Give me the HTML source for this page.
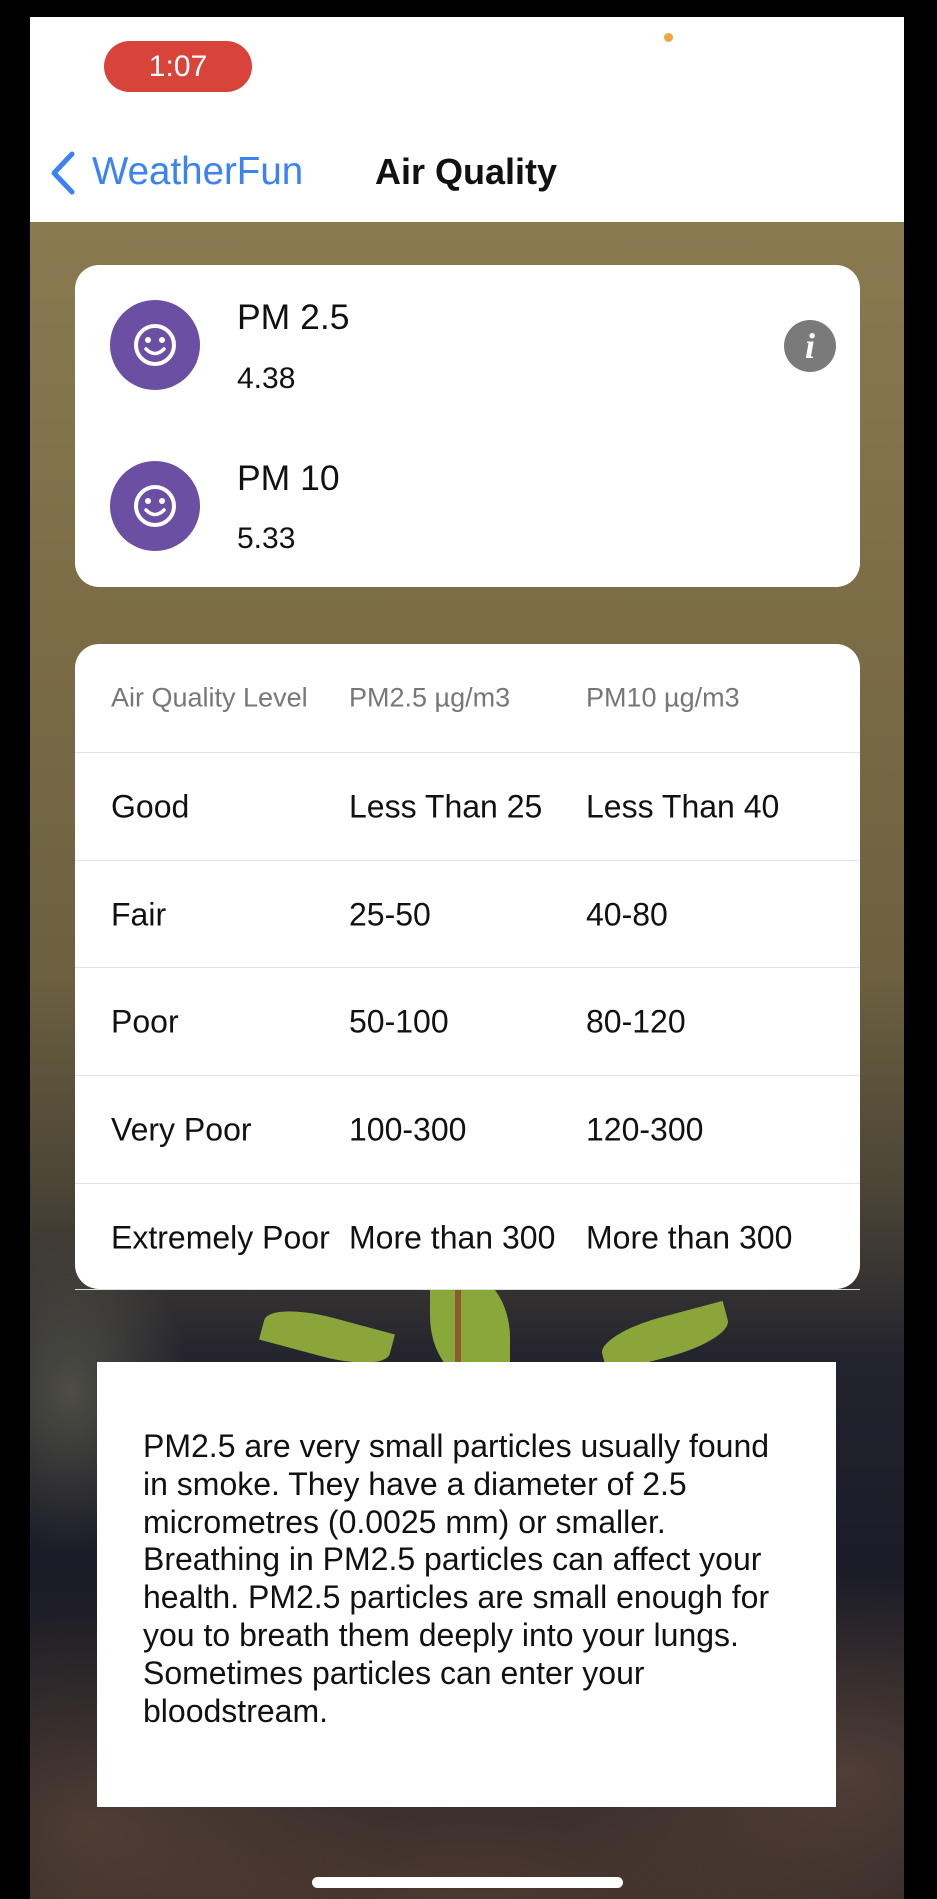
<!DOCTYPE html>
<html><head><meta charset="utf-8"><style>
*{margin:0;padding:0;box-sizing:border-box}
body{width:937px;height:1899px;background:#000;position:relative;overflow:hidden;font-family:"Liberation Sans",sans-serif}
.screen{position:absolute;left:30px;top:17px;width:874px;height:1882px;overflow:hidden;background:#fff}
.bg{position:absolute;left:0;top:205px;width:874px;height:1677px;
background:
radial-gradient(ellipse 120px 160px at 40px 1170px,rgba(120,120,90,.5),transparent),
radial-gradient(ellipse 520px 260px at 440px 1700px,rgba(110,80,60,.55),transparent),
radial-gradient(ellipse 300px 200px at 820px 1550px,rgba(120,90,70,.5),transparent),
radial-gradient(ellipse 300px 220px at 60px 1600px,rgba(110,85,65,.5),transparent),
linear-gradient(180deg,#8a7a50 0%,#7b6c46 25%,#6c6040 45%,#4a4436 58%,#23232e 68%,#1b1c27 80%,#2a2324 100%)}
.leaf{position:absolute;background:#7f9a32;border-radius:50% 0}
.card{position:absolute;background:#fff;border-radius:24px}
.circ{position:absolute;width:90px;height:90px;border-radius:50%;background:#6a4fa3}
.t{position:absolute;color:#111;white-space:nowrap}
.row{position:absolute;left:0;width:785px;height:108px;border-top:1px solid #e3e3e3}
.row span{position:absolute;top:50%;transform:translateY(-50%);font-size:32px;color:#111;white-space:nowrap}
</style></head><body>
<div class="screen">
 <div class="bg"></div>
 <div class="leaf" style="left:232px;top:1300px;width:130px;height:40px;transform:rotate(15deg);background:#8aa53a"></div>
 <div class="leaf" style="left:400px;top:1255px;width:80px;height:110px;border-radius:0 60% 0 60%;background:#88a83a"></div>
 <div class="leaf" style="left:570px;top:1300px;width:130px;height:40px;transform:rotate(-15deg);background:#8aa53a"></div>
 <div style="position:absolute;left:425px;top:1272px;width:6px;height:90px;background:#8a5a30"></div>
 <div style="position:absolute;left:74px;top:24px;width:148px;height:51px;border-radius:26px;background:#d9443a;color:#fff;font-size:30px;text-align:center;line-height:51px">1:07</div>
 <div style="position:absolute;left:634px;top:16px;width:9px;height:9px;border-radius:50%;background:#f0a540"></div>
 <svg style="position:absolute;left:18px;top:134px" width="30" height="44" viewBox="0 0 30 44"><path d="M24 3 L6 22 L24 41" fill="none" stroke="#3a82f6" stroke-width="5" stroke-linecap="round" stroke-linejoin="round"/></svg>
 <div class="t" style="left:62px;top:133px;font-size:38.5px;color:#3a82f6">WeatherFun</div>
 <div class="t" style="left:345px;top:134px;font-size:36px;font-weight:bold;color:#111">Air Quality</div>
 <div class="card" style="left:45px;top:248px;width:785px;height:322px">
  <div class="circ" style="left:35px;top:35px"></div>
  <div class="circ" style="left:35px;top:196px"></div>
  <svg style="position:absolute;left:57px;top:57px" width="46" height="46" viewBox="0 0 46 46"><circle cx="23" cy="23" r="19" fill="none" stroke="#fff" stroke-width="4"/><circle cx="16" cy="18" r="3" fill="#fff"/><circle cx="30" cy="18" r="3" fill="#fff"/><path d="M14 27 Q23 36 32 27" fill="none" stroke="#fff" stroke-width="3.5" stroke-linecap="round"/></svg>
  <svg style="position:absolute;left:57px;top:218px" width="46" height="46" viewBox="0 0 46 46"><circle cx="23" cy="23" r="19" fill="none" stroke="#fff" stroke-width="4"/><circle cx="16" cy="18" r="3" fill="#fff"/><circle cx="30" cy="18" r="3" fill="#fff"/><path d="M14 27 Q23 36 32 27" fill="none" stroke="#fff" stroke-width="3.5" stroke-linecap="round"/></svg>
  <div class="t" style="left:162px;top:32px;font-size:35.5px">PM 2.5</div>
  <div class="t" style="left:162px;top:97px;font-size:30px">4.38</div>
  <div class="t" style="left:162px;top:193px;font-size:35.5px">PM 10</div>
  <div class="t" style="left:162px;top:257px;font-size:30px">5.33</div>
  <div style="position:absolute;left:709px;top:55px;width:52px;height:52px;border-radius:50%;background:#7a7a7a;color:#fff;font-family:'Liberation Serif',serif;font-style:italic;font-weight:bold;font-size:36px;text-align:center;line-height:52px">i</div>
 </div>
 <div class="card" style="left:45px;top:627px;width:785px;height:645px;overflow:hidden">
  <div class="row" style="top:0;border-top:none"><span style="left:36px;font-size:27px;color:#777">Air Quality Level</span><span style="left:274px;font-size:27px;color:#777">PM2.5 µg/m3</span><span style="left:511px;font-size:27px;color:#777">PM10 µg/m3</span></div>
  <div class="row" style="top:108px"><span style="left:36px">Good</span><span style="left:274px">Less Than 25</span><span style="left:511px">Less Than 40</span></div>
  <div class="row" style="top:216px"><span style="left:36px">Fair</span><span style="left:274px">25-50</span><span style="left:511px">40-80</span></div>
  <div class="row" style="top:323px"><span style="left:36px">Poor</span><span style="left:274px">50-100</span><span style="left:511px">80-120</span></div>
  <div class="row" style="top:431px"><span style="left:36px">Very Poor</span><span style="left:274px">100-300</span><span style="left:511px">120-300</span></div>
  <div class="row" style="top:539px"><span style="left:36px">Extremely Poor</span><span style="left:274px">More than 300</span><span style="left:511px">More than 300</span></div>
 </div>
 <div style="position:absolute;left:45px;top:1272px;width:785px;height:1px;background:#ddd"></div>
 <div style="position:absolute;left:67px;top:1345px;width:739px;height:445px;background:#fff">
  <div class="t" style="left:46px;top:66px;font-size:32px;line-height:37.8px;color:#111">PM2.5 are very small particles usually found<br>in smoke. They have a diameter of 2.5<br>micrometres (0.0025 mm) or smaller.<br>Breathing in PM2.5 particles can affect your<br>health. PM2.5 particles are small enough for<br>you to breath them deeply into your lungs.<br>Sometimes particles can enter your<br>bloodstream.</div>
 </div>
 <div style="position:absolute;left:282px;top:1860px;width:311px;height:11px;border-radius:6px;background:#fff"></div>
</div>
</body></html>
